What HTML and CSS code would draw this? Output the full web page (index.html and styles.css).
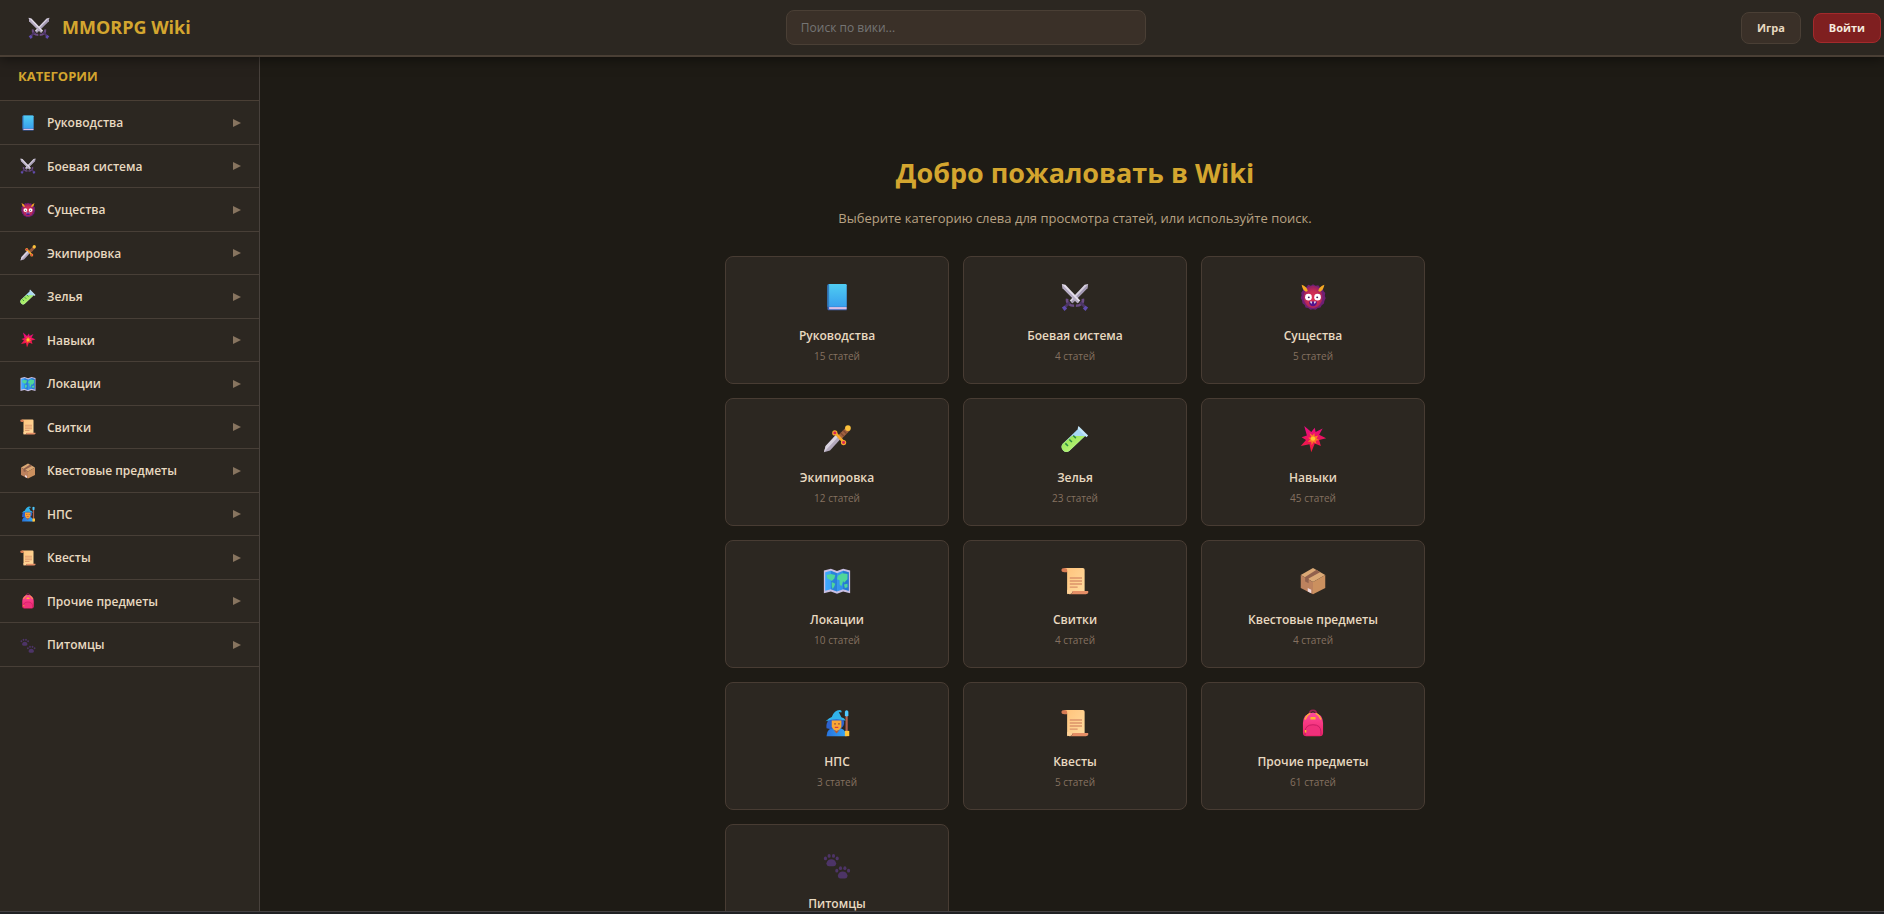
FILE: index.html
```
<!DOCTYPE html>
<html lang="ru">
<head>
  <meta charset="UTF-8">
  <meta name="viewport" content="width=device-width, initial-scale=1.0">
  <title>MMORPG Wiki</title>
  <link rel="stylesheet" href="styles.css">
</head>
<body>
  <!-- Icon sprite -->
  <svg class="sprite" aria-hidden="true">
    <defs>
      <linearGradient id="g-book" x1="0" y1="0" x2="0" y2="1"><stop offset="0" stop-color="#50cdf2"/><stop offset="1" stop-color="#38a0ee"/></linearGradient>
      <linearGradient id="g-blade" x1="0" y1="0" x2="1" y2="1"><stop offset="0" stop-color="#f0ebf4"/><stop offset="1" stop-color="#b9afc6"/></linearGradient>
      <radialGradient id="g-face" cx=".5" cy=".55" r=".5"><stop offset="0" stop-color="#e03454"/><stop offset=".65" stop-color="#c82c54"/><stop offset="1" stop-color="#9c2260"/></radialGradient>
      <linearGradient id="g-tube" x1="0" y1="0" x2="1" y2="1"><stop offset="0" stop-color="#8fe04e"/><stop offset="1" stop-color="#c6fb85"/></linearGradient>
      <linearGradient id="g-star" x1="0" y1="0" x2="0" y2="1"><stop offset="0" stop-color="#ea0a86"/><stop offset="1" stop-color="#f01d35"/></linearGradient>
      <linearGradient id="g-map" x1="0" y1="0" x2="1" y2="0"><stop offset="0" stop-color="#3fa9ff"/><stop offset="1" stop-color="#2f86dd"/></linearGradient>
      <linearGradient id="g-scroll" x1="0" y1="0" x2="1" y2="1"><stop offset="0" stop-color="#ffc27a"/><stop offset="1" stop-color="#ffdca0"/></linearGradient>
      <linearGradient id="g-bag" x1="0" y1="0" x2="0" y2="1"><stop offset="0" stop-color="#ff4b9c"/><stop offset="1" stop-color="#ec2266"/></linearGradient>
      <linearGradient id="g-robe" x1="0" y1="0" x2="1" y2="0"><stop offset="0" stop-color="#2873dd"/><stop offset="1" stop-color="#35a6f5"/></linearGradient>
    </defs>

    <symbol id="i-book" viewBox="0 0 32 32">
      <path d="M7 1h18.500q1.500 0 1.500 1.500V31H6q-1 0-1-1.500V3q0-2 2-2z" fill="#3c66b8"/>
      <path d="M7 27.500h20v2.500H7z" fill="#d9bfe4"/>
      <path d="M5 3q0-2 2-2v26H5z" fill="#2f7fc0"/>
      <path d="M7 1h18.500q1.500 0 1.500 1.500V27H7z" fill="url(#g-book)"/>
    </symbol>

    <symbol id="i-swords" viewBox="0 0 32 32">
      <path d="M31 1l-1 5-17 17-3-3L27 2z" fill="url(#g-blade)"/>
      <path d="M30 6L13 23l-1.500-1.500L31 1z" fill="#a399b3"/>
      <path d="M1 1l1 5 17 17 3-3L5 2z" fill="#e4deea"/>
      <path d="M1 1l1 5 17 17 1.500-1.500z" fill="#b5abc3"/>
      <path d="M7 18c-1 5 3 8 8 8M25 18c1 5-3 8-8 8" fill="none" stroke="#6b4c84" stroke-width="3"/>
      <path d="M10 22l-6 6M22 22l6 6" stroke="#4c3566" stroke-width="3"/>
      <path d="M1 28l3-2 3 3-3 3zM31 28l-3-2-3 3 3 3z" fill="#604cae"/>
    </symbol>

    <symbol id="i-demon" viewBox="0 0 32 32">
      <path d="M16 1.500l3 1.500 3-.5 2 2.500 3 1 1 3 2 2.500-.5 3 1 3-1.500 3-.5 3-2.500 2-1.500 2.500-3 .5-2.500 2-3-.5-3 .5-2.500-2-3-.5L6.500 25 4 23l-.5-3L2 17l1-3-.5-3 2-2.500 1-3 3-1L10.500 2l3 1z" fill="#6f1f75"/>
      <ellipse cx="16" cy="16" rx="11" ry="12.500" fill="url(#g-face)"/>
      <path d="M3 2q6 2 7 7l-2 1Q4 8 3 2zM29 2q-6 2-7 7l2 1q4-2 5-8z" fill="#f5a823"/>
      <circle cx="10.800" cy="16.200" r="3.800" fill="#fff"/><circle cx="21.200" cy="16.200" r="3.800" fill="#fff"/>
      <circle cx="11.200" cy="16.400" r="1.100" fill="#47205e"/><circle cx="20.800" cy="16.400" r="1.100" fill="#47205e"/>
      <path d="M11.500 21h9q0 5.500-4.500 5.500T11.500 21z" fill="#52148e"/>
      <path d="M12.500 21h2.500l-1 3zM17 21h2.500L18 24z" fill="#fff"/>
    </symbol>

    <symbol id="i-dagger" viewBox="0 0 32 32">
      <path d="M1 31l2-7 12-13 5 5L8 29z" fill="#b3a9bd"/>
      <path d="M1 31l2-7 12-13 2.500 2.500z" fill="#d9d3e0"/>
      <path d="M16 13L27 2l4 4-11 11z" fill="#9f6040"/>
      <path d="M20 9l4 4M23 6l4 4" stroke="#7d4931" stroke-width="1.500"/>
      <circle cx="28.500" cy="3.500" r="3.300" fill="#fcc13b"/>
      <path d="M14 9l10 11" stroke="#f7a82c" stroke-width="3"/>
      <circle cx="13.500" cy="9" r="3" fill="#f7a82c"/><circle cx="23.500" cy="20" r="3" fill="#f7a82c"/>
      <circle cx="13.500" cy="9" r="1.700" fill="#d92456"/><circle cx="23.500" cy="20" r="1.700" fill="#d92456"/>
    </symbol>

    <symbol id="i-tube" viewBox="0 0 32 32">
      <path d="M20 4l8 8L10 29q-4 3.500-7.500 0t-.5-7.500z" fill="#a7d8f5"/>
      <path d="M12.500 12.500H27.500L10 29q-4 3.500-7.500 0t-.5-7.500z" fill="url(#g-tube)"/>
      <path d="M20 1l11 11-2 2L19 4z" fill="#c4e8fb"/>
      <path d="M14 12l3 3M9.500 16.500l3 3M5 21l3 3" stroke="#2a8a42" stroke-width="1.700"/>
    </symbol>

    <symbol id="i-star" viewBox="0 0 32 32">
      <path d="M6 1l8 7 4-5 1 5 8-4-4 7 8 4-8 2 2 7-7-3-4 10-2-9-10 2 6-7-5-3 6-2z" fill="url(#g-star)"/>
      <path d="M12 9l3.500 3 2-3 .5 4 4-1-2 3.500 3 1.500-4 1 1 3.500-3.500-2-2 3.500-.5-4-4 0 3-2.500-2.500-2 3.500-.5z" fill="#fb7a25"/>
      <circle cx="16" cy="15.500" r="2.500" fill="#fec532"/>
    </symbol>

    <symbol id="i-map" viewBox="0 0 32 32">
      <path d="M1 4l8-2 7 2.500L23 2l8 2v26l-8-2-7 2.500L9 28l-8 2z" fill="#c9bfe3"/>
      <path d="M2.500 6L9 4.200 16 7l7-2.800L29.500 6v21L23 25.500 16 28l-7-2.500L2.500 27z" fill="url(#g-map)"/>
      <path d="M9 4.200L16 7v21l-7-2.500zM23 4.200L29.500 6v21L23 25.500z" fill="#1f6cc7" opacity=".55"/>
      <path d="M4 9l5-1 5 1-1 4-3 3-1-1-4-2zM10 17l4 2-1 3-2 3-1-3zM17 10l5-3 6 1v6l-4 4-1-2-2 6-2-2v-5l-3-1zM24 20l4-1v4l-3 1z" fill="#50d69a"/>
    </symbol>

    <symbol id="i-scroll" viewBox="0 0 32 32">
      <path d="M4 1h21q2 0 2 2v25H13L7 31V5z" fill="url(#g-scroll)"/>
      <path d="M4 1q-3.500 0-3.500 2.500T4 6h3V3Q7 1 4 1z" fill="#d77c54"/>
      <path d="M13 27.500h18q1 3.500-2.500 3.500H10q3.500 0 3-3.500z" fill="#e58e66"/>
      <path d="M7 26v2q0 3 3 3t3-3.500z" fill="#ffd196"/>
      <path d="M10 12.500h14M10 16h14M10 19.500h14M10 23h9" stroke="#dc9269" stroke-width="1.700"/>
    </symbol>

    <symbol id="i-box" viewBox="0 0 32 32">
      <path d="M16 1l14 8-14 8L2 9z" fill="#dba976"/>
      <path d="M2 9l14 8v14L2 24z" fill="#bd825e"/>
      <path d="M30 9l-14 8v14l14-7z" fill="#cb905f"/>
      <path d="M20 3L7 11.500v5l4 2v-5.500L24 6z" fill="#91614d"/>
      <path d="M10 24l4 2v4l-4-2z" fill="#efd8dc"/>
    </symbol>

    <symbol id="i-mage" viewBox="0 0 32 32">
      <path d="M4 31q0-10 11-10t12 10z" fill="url(#g-robe)"/>
      <path d="M7 11q-4 6-3 11l5 1 12-1q5-4 2-11z" fill="#2d62ce"/>
      <path d="M10 13h11v7q-1 4-5.500 5Q11 24 10 20z" fill="#fba634"/>
      <path d="M12 24l3.500 4 3.500-4-3.500 1z" fill="#b45e37"/>
      <path d="M13 17h1.500M17.500 17H19" stroke="#703842" stroke-width="1.500"/>
      <path d="M13.500 21h4" stroke="#cf3746" stroke-width="1.300"/>
      <path d="M3 14Q7 10 10 9q3-8 9-8 3 0 2 3l-3-.5 3 6q4 1 5 4-11-4-23 .5z" fill="#31b3ea"/>
      <path d="M27 7v24" stroke="#b3604e" stroke-width="2.500"/>
      <path d="M25 3q2-3 4 0v4q-2 3-4 0z" fill="#4fc8ff"/>
      <path d="M25 25h5v6h-5z" fill="#ffc53a"/>
    </symbol>

    <symbol id="i-bag" viewBox="0 0 32 32">
      <path d="M12 6q0-4.500 4-4.500T20 6" fill="none" stroke="#9c2351" stroke-width="2"/>
      <path d="M16 4q11 1 11.500 12v11q0 4-4 4h-15q-4 0-4-4V16Q5 5 16 4z" fill="url(#g-bag)"/>
      <path d="M7 12q2-5.500 6-7M25 12q-2-5.500-6-7" fill="none" stroke="#ffb232" stroke-width="1.700"/>
      <rect x="13" y="9" width="6" height="3" rx="1" fill="#ffb232"/>
      <path d="M7 30v-4q0-8 9-8t9 8v4" fill="#f0307b" stroke="#c21861" stroke-width="1"/>
      <path d="M7.500 24v3" stroke="#ffb232" stroke-width="1.800"/>
    </symbol>

    <symbol id="i-paws" viewBox="0 -2 32 32">
      <g id="paw" fill="#4d3467">
        <path d="M9.500 7.500q4.500 0 5.500 4.500 0 3.500-3 3.500H7q-3 0-3-3.500 1-4.500 5.500-4.500z"/>
        <ellipse cx="2.800" cy="6.500" rx="1.800" ry="2.200"/><ellipse cx="7" cy="3.600" rx="1.800" ry="2.200"/>
        <ellipse cx="12" cy="3.600" rx="1.800" ry="2.200"/><ellipse cx="16.200" cy="6.500" rx="1.800" ry="2.200"/>
      </g>
      <use href="#paw" x="13" y="14"/>
    </symbol>
  </svg>

  <header class="header">
    <a class="logo" href="#">
      <svg class="logo-icon" aria-hidden="true"><use href="#i-swords"/></svg>
      <span>MMORPG Wiki</span>
    </a>
    <input class="search" type="search" placeholder="Поиск по вики..." aria-label="Поиск по вики">
    <div class="header-actions">
      <button class="btn" type="button">Игра</button>
      <button class="btn btn-login" type="button">Войти</button>
    </div>
  </header>

  <div class="layout">
    <aside class="sidebar">
      <h2 class="sidebar-title">КАТЕГОРИИ</h2>
      <nav class="categories">
        <button class="category" type="button"><svg class="category-icon" aria-hidden="true"><use href="#i-book"/></svg><span>Руководства</span><i class="arrow"></i></button>
        <button class="category" type="button"><svg class="category-icon" aria-hidden="true"><use href="#i-swords"/></svg><span>Боевая система</span><i class="arrow"></i></button>
        <button class="category" type="button"><svg class="category-icon" aria-hidden="true"><use href="#i-demon"/></svg><span>Существа</span><i class="arrow"></i></button>
        <button class="category" type="button"><svg class="category-icon" aria-hidden="true"><use href="#i-dagger"/></svg><span>Экипировка</span><i class="arrow"></i></button>
        <button class="category" type="button"><svg class="category-icon" aria-hidden="true"><use href="#i-tube"/></svg><span>Зелья</span><i class="arrow"></i></button>
        <button class="category" type="button"><svg class="category-icon" aria-hidden="true"><use href="#i-star"/></svg><span>Навыки</span><i class="arrow"></i></button>
        <button class="category" type="button"><svg class="category-icon" aria-hidden="true"><use href="#i-map"/></svg><span>Локации</span><i class="arrow"></i></button>
        <button class="category" type="button"><svg class="category-icon" aria-hidden="true"><use href="#i-scroll"/></svg><span>Свитки</span><i class="arrow"></i></button>
        <button class="category" type="button"><svg class="category-icon" aria-hidden="true"><use href="#i-box"/></svg><span>Квестовые предметы</span><i class="arrow"></i></button>
        <button class="category" type="button"><svg class="category-icon" aria-hidden="true"><use href="#i-mage"/></svg><span>НПС</span><i class="arrow"></i></button>
        <button class="category" type="button"><svg class="category-icon" aria-hidden="true"><use href="#i-scroll"/></svg><span>Квесты</span><i class="arrow"></i></button>
        <button class="category" type="button"><svg class="category-icon" aria-hidden="true"><use href="#i-bag"/></svg><span>Прочие предметы</span><i class="arrow"></i></button>
        <button class="category" type="button"><svg class="category-icon" aria-hidden="true"><use href="#i-paws"/></svg><span>Питомцы</span><i class="arrow"></i></button>
      </nav>
    </aside>

    <main class="content">
      <h1 class="welcome-title">Добро пожаловать в Wiki</h1>
      <p class="welcome-text">Выберите категорию слева для просмотра статей, или используйте поиск.</p>

      <div class="cards">
        <a class="card" href="#"><svg class="card-icon" aria-hidden="true"><use href="#i-book"/></svg><span class="card-name">Руководства</span><span class="card-count">15 статей</span></a>
        <a class="card" href="#"><svg class="card-icon" aria-hidden="true"><use href="#i-swords"/></svg><span class="card-name">Боевая система</span><span class="card-count">4 статей</span></a>
        <a class="card" href="#"><svg class="card-icon" aria-hidden="true"><use href="#i-demon"/></svg><span class="card-name">Существа</span><span class="card-count">5 статей</span></a>
        <a class="card" href="#"><svg class="card-icon" aria-hidden="true"><use href="#i-dagger"/></svg><span class="card-name">Экипировка</span><span class="card-count">12 статей</span></a>
        <a class="card" href="#"><svg class="card-icon" aria-hidden="true"><use href="#i-tube"/></svg><span class="card-name">Зелья</span><span class="card-count">23 статей</span></a>
        <a class="card" href="#"><svg class="card-icon" aria-hidden="true"><use href="#i-star"/></svg><span class="card-name">Навыки</span><span class="card-count">45 статей</span></a>
        <a class="card" href="#"><svg class="card-icon" aria-hidden="true"><use href="#i-map"/></svg><span class="card-name">Локации</span><span class="card-count">10 статей</span></a>
        <a class="card" href="#"><svg class="card-icon" aria-hidden="true"><use href="#i-scroll"/></svg><span class="card-name">Свитки</span><span class="card-count">4 статей</span></a>
        <a class="card" href="#"><svg class="card-icon" aria-hidden="true"><use href="#i-box"/></svg><span class="card-name">Квестовые предметы</span><span class="card-count">4 статей</span></a>
        <a class="card" href="#"><svg class="card-icon" aria-hidden="true"><use href="#i-mage"/></svg><span class="card-name">НПС</span><span class="card-count">3 статей</span></a>
        <a class="card" href="#"><svg class="card-icon" aria-hidden="true"><use href="#i-scroll"/></svg><span class="card-name">Квесты</span><span class="card-count">5 статей</span></a>
        <a class="card" href="#"><svg class="card-icon" aria-hidden="true"><use href="#i-bag"/></svg><span class="card-name">Прочие предметы</span><span class="card-count">61 статей</span></a>
        <a class="card" href="#"><svg class="card-icon" aria-hidden="true"><use href="#i-paws"/></svg><span class="card-name">Питомцы</span></a>
      </div>
    </main>
  </div>

  <footer class="bottom-bar"></footer>
</body>
</html>
```
FILE: styles.css
```
:root {
  --bg: #1e1b15;
  --panel: #2c2721;
  --panel-light: #3a3028;
  --line: #4a3f35;
  --gold: #d4a62f;
  --text: #e8d9c0;
  --text-soft: #b8a283;
  --text-muted: #857160;
}

* {
  box-sizing: border-box;
}

body {
  margin: 0;
  height: 100vh;
  display: flex;
  flex-direction: column;
  overflow: hidden;
  background: var(--bg);
  color: var(--text);
  font-family: "Segoe UI", "Open Sans", "Noto Sans", sans-serif;
  font-size: 12px;
  line-height: 1.5;
}

button,
input {
  font-family: inherit;
  font-size: 12px;
}

.sprite {
  position: absolute;
  width: 0;
  height: 0;
}

/* Header */
.header {
  display: flex;
  align-items: center;
  justify-content: space-between;
  flex-shrink: 0;
  padding: 10px 3px 10px 28px;
  background: var(--panel);
  border-bottom: 2px solid var(--line);
  box-shadow: 0 2px 12px rgba(0, 0, 0, 0.5);
  z-index: 1;
}

.logo {
  display: flex;
  align-items: center;
  gap: 12px;
  color: var(--gold);
  font-size: 18px;
  font-weight: 700;
  text-decoration: none;
}

.logo-icon {
  width: 22px;
  height: 22px;
}

.search {
  width: 360px;
  height: 35px;
  padding: 0 14px;
  background: var(--panel-light);
  border: 1px solid var(--line);
  border-radius: 8px;
  color: var(--text);
  outline: none;
}

.search::placeholder {
  color: #757575;
}

.header-actions {
  display: flex;
  align-items: center;
  gap: 12px;
}

.btn {
  height: 32px;
  padding: 0 15px;
  background: var(--panel-light);
  border: 1px solid var(--line);
  border-radius: 8px;
  color: var(--text);
  font-size: 11px;
  font-weight: 700;
  cursor: pointer;
}

.btn-login {
  height: 30px;
  background: #7f1f20;
  border-color: #a32a2c;
  color: #f5eadf;
}

/* Page layout */
.layout {
  display: flex;
  flex: 1;
  min-height: 0;
}

.sidebar {
  width: 260px;
  flex-shrink: 0;
  background: var(--panel);
  border-right: 1px solid #48413c;
}

.sidebar-title {
  margin: 0;
  padding: 9px 18px 13px;
  background: #26211c;
  border-bottom: 1px solid var(--line);
  color: var(--gold);
  font-size: 13px;
  font-weight: 700;
  line-height: 21px;
}

.category {
  display: flex;
  align-items: center;
  width: 100%;
  padding: 12px 18px 11px 20px;
  gap: 11px;
  background: none;
  border: none;
  border-bottom: 1px solid #483f37;
  color: var(--text);
  font-weight: 600;
  line-height: 1.625;
  text-align: left;
  cursor: pointer;
}

.category-icon {
  width: 16px;
  height: 16px;
}

.arrow {
  margin-left: auto;
  border-left: 8px solid #87745f;
  border-top: 4px solid transparent;
  border-bottom: 4px solid transparent;
}

.content {
  flex: 1;
  padding: 94px 24px 0 30px;
  overflow: hidden;
  text-align: center;
}

.welcome-title {
  margin: 0 0 13px;
  color: var(--gold);
  font-size: 27px;
  font-weight: 700;
  line-height: 44px;
}

.welcome-text {
  margin: 0 0 28px;
  color: var(--text-soft);
  font-size: 13px;
  line-height: 20px;
}

/* Category cards */
.cards {
  display: grid;
  grid-template-columns: repeat(3, 1fr);
  gap: 14px;
  max-width: 700px;
  margin: 0 auto;
}

.card {
  display: flex;
  flex-direction: column;
  align-items: center;
  padding: 26px 16px 17px;
  background: var(--panel);
  border: 1px solid #483c33;
  border-radius: 8px;
  color: var(--text);
  text-decoration: none;
  min-height: 128px;
}

.card-icon {
  width: 28px;
  height: 28px;
  margin-bottom: 15px;
}

.card-name {
  font-weight: 600;
  line-height: 20px;
}

.card-count {
  color: var(--text-muted);
  font-size: 10px;
  line-height: 20px;
}

.bottom-bar {
  flex-shrink: 0;
  height: 3px;
  background: #202124;
  border-top: 1px solid #444143;
}
```
